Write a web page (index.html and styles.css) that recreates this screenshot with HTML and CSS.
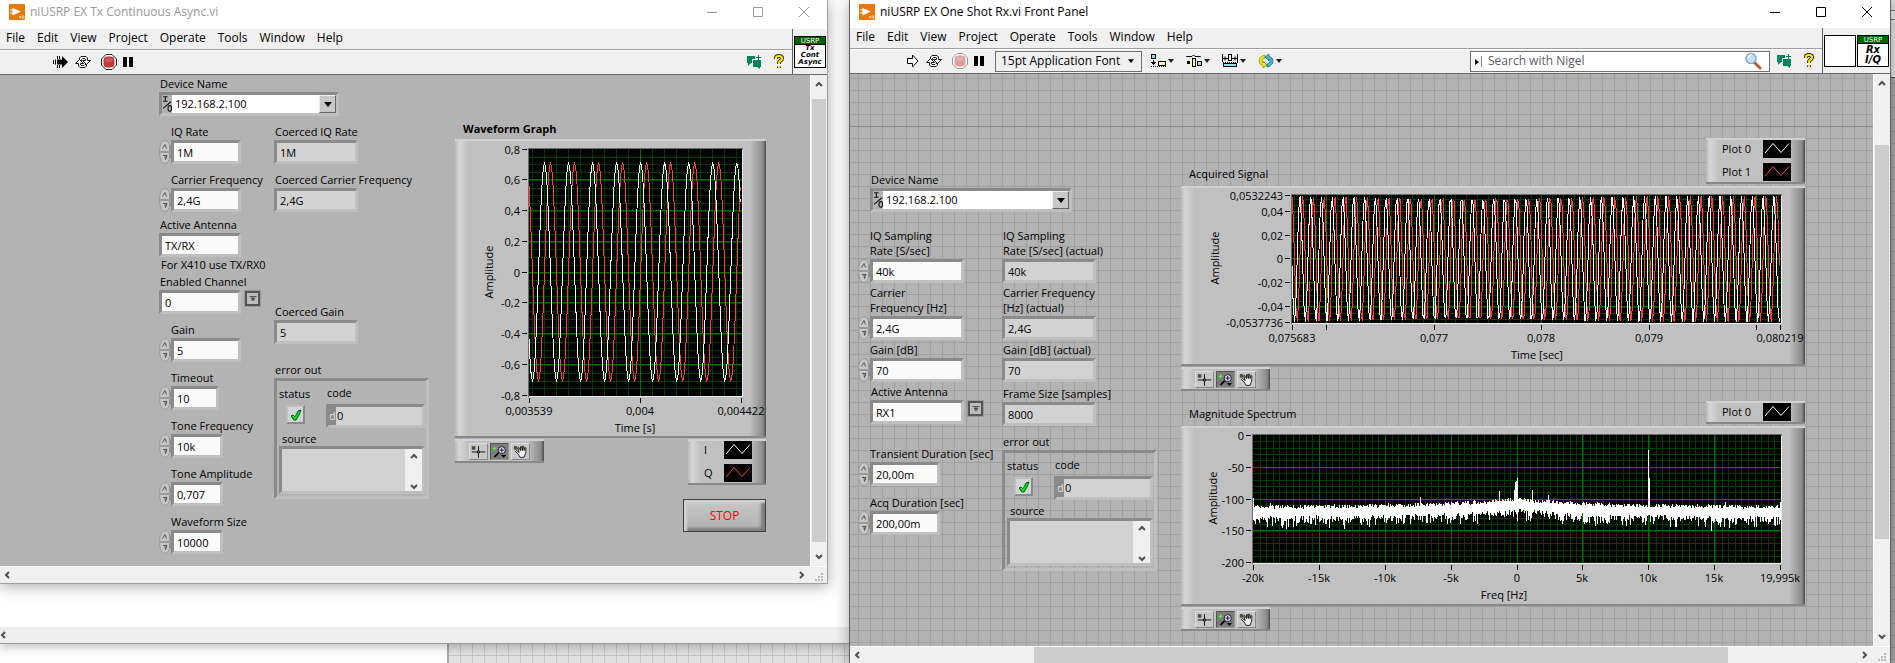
FILE: index.html
```html
<!DOCTYPE html>
<html lang="en">
<head>
<meta charset="utf-8">
<title>niUSRP front panels</title>
<link rel="stylesheet" href="styles.css">
</head>
<body>
<svg class="defs" aria-hidden="true">
  <symbol id="app" viewBox="0 0 16 16"><rect width="16" height="16" rx="1" fill="#e8780c"/><path d="M3.500 4 L12 7.500 L3.500 11.500Z" fill="#fff"/><path d="M1 6h3M1 9h3" stroke="#fff"/><path d="M10 12l2 2m0-2l-2 2M13 12h2v2h-2z" stroke="#fbd9b8" fill="none" stroke-width=".8"/></symbol>
  <symbol id="min" viewBox="0 0 12 12"><path d="M1 6.500h10" stroke="currentColor"/></symbol>
  <symbol id="max" viewBox="0 0 12 12"><path d="M1.500 1.500h9v9h-9z" stroke="currentColor" fill="none"/></symbol>
  <symbol id="cls" viewBox="0 0 12 12"><path d="M1 1l10 10M11 1L1 11" stroke="currentColor" fill="none"/></symbol>
  <symbol id="runfast" viewBox="0 0 16 16"><path d="M9 2l6 6-6 6v-3.500H4v-5h5z" fill="#000"/><path d="M.500 6v4M2.500 5.500v5M4.500 2v3M6.500 2v3M4.500 11v3M6.500 11v3" stroke="#000"/></symbol>
  <symbol id="run" viewBox="0 0 16 16"><path d="M3.500 5.500h5v-3.500L14 8l-5.500 6v-3.500h-5z" fill="#fff" stroke="#000"/></symbol>
  <symbol id="cont" viewBox="0 0 16 16"><path d="M4.500 6.500V4L6 2.500h5L12.500 4v2.500h3l-4 4-4-4h3V5L10 4.500H7.500L6.500 5.500v1z" fill="#fff" stroke="#000" stroke-width=".9"/><path d="M11.500 10.500V12L10 13.500H5L3.500 12V9.500h-3l4-4 4 4h-3V11l.500.500h3l1-1z" fill="#fff" stroke="#000" stroke-width=".9"/></symbol>
  <symbol id="abort" viewBox="0 0 16 16"><path d="M5 .500h6L15.500 5v6L11 15.500H5L.500 11V5z" fill="#fff" stroke="currentColor"/><rect x="2.500" y="2.500" width="11" height="11" rx="4" fill="var(--stop)"/><rect x="4" y="4" width="8" height="4" rx="2" fill="#fff" opacity=".15"/></symbol>
  <symbol id="pause" viewBox="0 0 10 12"><path d="M0 1h4v10H0zM6 1h4v10H6z" fill="#000"/></symbol>
  <symbol id="align" viewBox="0 0 24 16"><rect x="1.500" y="1.500" width="4" height="4" fill="#8fe3ee" stroke="#000"/><rect x="8.500" y="8.500" width="7" height="4" fill="#fdf6a8" stroke="#000"/><path d="M3.500 7v5M1 9.500h5M2 10.500h3" stroke="#000"/><path d="M1 13.500h15" stroke="#000" stroke-dasharray="1 1"/><path d="M18 6h6l-3 4z" fill="#222"/></symbol>
  <symbol id="distrib" viewBox="0 0 24 16"><path d="M.500 4V3.500H6L7.500 2 9 3.500h5.500V4" stroke="#000" fill="none"/><path d="M1 8h3v3H1z" fill="#000"/><rect x="6.500" y="5.500" width="3" height="8" fill="#fdf6a8" stroke="#000"/><rect x="11.500" y="8.500" width="4" height="4" fill="#8fe3ee" stroke="#000"/><path d="M18 6h6l-3 4z" fill="#222"/></symbol>
  <symbol id="resize" viewBox="0 0 24 16"><path d="M.500 1v8M15.500 1v8M1 5.500h5M10 5.500h5M3 3.500v4M13 3.500v4" stroke="#000" fill="none"/><path d="M1 9.500h15" stroke="#000" stroke-dasharray="1 1"/><rect x="6.500" y="1.500" width="3" height="6" fill="#fdf6a8" stroke="#000"/><rect x="1.500" y="10.500" width="13" height="3" fill="#8fe3ee" stroke="#000"/><path d="M18 6h6l-3 4z" fill="#222"/></symbol>
  <symbol id="reorder" viewBox="0 0 24 16"><path d="M7 2C1 3 0 8 2 11l3 2v2l4-3-4-4v2C3 8 4 6 7 5z" fill="#efe21a" stroke="#8a8400" stroke-width=".7"/><path d="M9 14c6-1 7-6 5-9l-3-2V1L7 4l4 4V6c2 2 1 4-2 5z" fill="#3fb4d0" stroke="#0b6079" stroke-width=".7"/><path d="M18 6h6l-3 4z" fill="#222"/></symbol>
  <symbol id="chat" viewBox="0 0 16 14"><path d="M1 1h8v3H6v4H5l-3 3V8H1z" fill="#00855c"/><path d="M7 5h8v7h-1v2l-3-2H7z" fill="#00855c"/><path d="M12.500 0v5M10 2.500h5" stroke="#00855c"/></symbol>
  <symbol id="help" viewBox="0 0 12 16"><path d="M3 5V4q0-2 3-2t3 2.500q0 1.500-2 2.500-1 .500-1 3M6 12.500v1.500" fill="none" stroke="#222" stroke-width="4"/><path d="M3 5V4q0-2 3-2t3 2.500q0 1.500-2 2.500-1 .500-1 3M6 12.200v2" fill="none" stroke="#ffef00" stroke-width="2.200"/></symbol>
  <symbol id="lens" viewBox="0 0 18 18"><path d="M10 10l6 6" stroke="#b0603a" stroke-width="3" stroke-linecap="round"/><circle cx="7" cy="6.500" r="5" fill="#c4e4fa" stroke="#8aa8c8" stroke-width="1.500"/><path d="M4 6q1-3 4-3" stroke="#fff" fill="none" stroke-width="1.500"/></symbol>
  <symbol id="up" viewBox="0 0 8 6"><path d="M1 5l3-3 3 3" fill="none" stroke="#505050" stroke-width="2"/></symbol>
  <symbol id="down" viewBox="0 0 8 6"><path d="M1 1l3 3 3-3" fill="none" stroke="#505050" stroke-width="2"/></symbol>
  <symbol id="left" viewBox="0 0 6 8"><path d="M5 1L2 4l3 3" fill="none" stroke="#505050" stroke-width="2"/></symbol>
  <symbol id="right" viewBox="0 0 6 8"><path d="M1 1l3 3-3 3" fill="none" stroke="#505050" stroke-width="2"/></symbol>
  <symbol id="grip" viewBox="0 0 9 9"><path d="M6 0h2v2H6zM3 3h2v2H3zM6 3h2v2H6zM0 6h2v2H0zM3 6h2v2H3zM6 6h2v2H6z" fill="#bcbcbc"/></symbol>
  <symbol id="io" viewBox="0 0 9 16"><path d="M1 1.500h4M3 1.500v4M1 5.500h4M1 12L8 6M6.500 9.500h1l1 1v3l-1 1h-1l-1-1v-3z" fill="none" stroke="#111"/></symbol>
  <symbol id="drop" viewBox="0 0 8 5"><path d="M0 0h8L4 5z" fill="#000"/></symbol>
  <symbol id="ring" viewBox="0 0 8 6"><path d="M.500 .500h7M2 2h4L4 5z" fill="#555" stroke="#555"/></symbol>
  <symbol id="incr" viewBox="0 0 12 12"><path d="M.500 11.500Q1 1 6 .500 11 1 11.500 11.500z" fill="#c6c6c6" stroke="#9a9a9a"/><path d="M11 5v6" stroke="#777"/><path d="M3.500 8.500L6 4.500l1.500 4" fill="none" stroke="#555"/></symbol>
  <symbol id="decr" viewBox="0 0 12 12"><path d="M.500 .500Q1 11 6 11.500 11 11 11.500 .500z" fill="#c6c6c6" stroke="#9a9a9a"/><path d="M11 1v5" stroke="#777"/><path d="M4 3.500h4L6.500 7.500 6 4" fill="none" stroke="#555"/></symbol>
  <symbol id="tick" viewBox="0 0 14 14"><path d="M2 8l2-1 2 2 3-6 3-1-2 5-3 5H5z" fill="#00f000" stroke="#052" stroke-width="1"/></symbol>
  <symbol id="cursor" viewBox="0 0 19 16"><rect x="2" y="2" width="4" height="4" fill="#3c5a34"/><path d="M2 8.500h15M9.500 2v13" stroke="#000"/><rect x="8.500" y="7.500" width="2" height="2" fill="#bbb" stroke="#000" stroke-width=".8"/></symbol>
  <symbol id="zoomer" viewBox="0 0 19 16"><path d="M2 4.500h4M4 2.500v4" stroke="#4f3" stroke-width="1.400"/><path d="M9 9l-5 5" stroke="#000" stroke-width="2"/><circle cx="12" cy="6.500" r="4" fill="#dde" stroke="#112"/><path d="M9.500 6.500h5M12 4v5" stroke="#112"/><path d="M11 12h6l-3 3z" fill="#000"/></symbol>
  <symbol id="hand" viewBox="0 0 19 16"><rect x="2" y="2" width="4" height="4" fill="#3c5a34"/><path d="M7 11L4 8l1-1 3 2L6.500 4l1-.500L9.500 7V2.500h1L11.500 7l.500-5h1l.500 5 1-3.500 1 .500V9l-2 5.500H9z" fill="#eee" stroke="#000" stroke-width=".9"/></symbol>
  <symbol id="white-line" viewBox="0 0 28 18"><rect width="28" height="18" fill="#000"/><path d="M2 13l8-9.500 8 9 8-9" fill="none" stroke="#fff"/></symbol>
  <symbol id="red-line" viewBox="0 0 28 18"><rect width="28" height="18" fill="#000"/><path d="M2 13l8-9.500 8 9 8-9" fill="none" stroke="#f04848"/></symbol>
</svg>

<main class="desktop">
  <div class="backdrop"><div class="sheet"></div></div>
  <div class="back-window"><div class="back-bar"><svg width="6" height="8"><use href="#left"/></svg></div></div>
  <div class="edge"></div>

  <section class="window tx">
    <header class="titlebar muted">
      <svg width="16" height="16"><use href="#app"/></svg><h1>niUSRP EX Tx Continuous Async.vi</h1>
      <button aria-label="Minimize"><svg width="12" height="12"><use href="#min"/></svg></button><button aria-label="Maximize"><svg width="12" height="12"><use href="#max"/></svg></button><button aria-label="Close"><svg width="12" height="12"><use href="#cls"/></svg></button>
    </header>
    <div class="head">
      <div class="bars">
        <nav class="menu"><a href="#">File</a><a href="#">Edit</a><a href="#">View</a><a href="#">Project</a><a href="#">Operate</a><a href="#">Tools</a><a href="#">Window</a><a href="#">Help</a></nav>
        <div class="toolbar">
          <button aria-label="Run"><svg width="16" height="16"><use href="#runfast"/></svg></button>
          <button aria-label="Run continuously"><svg width="16" height="16"><use href="#cont"/></svg></button>
          <button class="abort" aria-label="Abort"><svg width="16" height="16"><use href="#abort"/></svg></button>
          <button aria-label="Pause"><svg width="10" height="12"><use href="#pause"/></svg></button>
          <span class="fill"></span>
          <button aria-label="Nigel"><svg width="16" height="14"><use href="#chat"/></svg></button>
          <button class="help" aria-label="Help"><svg width="12" height="16"><use href="#help"/></svg></button>
        </div>
      </div>
      <div class="icons"><div class="vi"><b>USRP</b><i>Tx<br>Cont<br>Async</i></div></div>
    </div>
    <div class="view">
      <div class="panel">
        <div class="controls">
          <div class="item"><label for="t-dev">Device Name</label><div class="field combo"><svg width="9" height="16"><use href="#io"/></svg><select id="t-dev"><option>192.168.2.100</option></select><span class="arrow"><svg width="8" height="5"><use href="#drop"/></svg></span></div></div>
          <div class="cols">
            <div class="col">
              <div class="item num"><label for="t1">IQ Rate</label><div class="spin"><button aria-label="Increment"><svg width="12" height="12"><use href="#incr"/></svg></button><button aria-label="Decrement"><svg width="12" height="12"><use href="#decr"/></svg></button></div><input class="field w70" id="t1" value="1M"></div>
              <div class="item num close"><label for="t2">Carrier Frequency</label><div class="spin"><button aria-label="Increment"><svg width="12" height="12"><use href="#incr"/></svg></button><button aria-label="Decrement"><svg width="12" height="12"><use href="#decr"/></svg></button></div><input class="field w70" id="t2" value="2,4G"></div>
              <div class="item tight"><label for="t3">Active Antenna</label><input class="field w82" id="t3" value="TX/RX"></div>
              <p class="hint">For X410 use TX/RX0</p>
              <div class="item"><label for="t4">Enabled Channel</label><div class="row"><input class="field w82" id="t4" value="0"><button class="ring" aria-label="Channel list"><svg width="8" height="6"><use href="#ring"/></svg></button></div></div>
              <div class="item num"><label for="t5">Gain</label><div class="spin"><button aria-label="Increment"><svg width="12" height="12"><use href="#incr"/></svg></button><button aria-label="Decrement"><svg width="12" height="12"><use href="#decr"/></svg></button></div><input class="field w70" id="t5" value="5"></div>
              <div class="item num"><label for="t6">Timeout</label><div class="spin"><button aria-label="Increment"><svg width="12" height="12"><use href="#incr"/></svg></button><button aria-label="Decrement"><svg width="12" height="12"><use href="#decr"/></svg></button></div><input class="field w48" id="t6" value="10"></div>
              <div class="item num"><label for="t7">Tone Frequency</label><div class="spin"><button aria-label="Increment"><svg width="12" height="12"><use href="#incr"/></svg></button><button aria-label="Decrement"><svg width="12" height="12"><use href="#decr"/></svg></button></div><input class="field w52" id="t7" value="10k"></div>
              <div class="item num"><label for="t8">Tone Amplitude</label><div class="spin"><button aria-label="Increment"><svg width="12" height="12"><use href="#incr"/></svg></button><button aria-label="Decrement"><svg width="12" height="12"><use href="#decr"/></svg></button></div><input class="field w52" id="t8" value="0,707"></div>
              <div class="item num"><label for="t9">Waveform Size</label><div class="spin"><button aria-label="Increment"><svg width="12" height="12"><use href="#incr"/></svg></button><button aria-label="Decrement"><svg width="12" height="12"><use href="#decr"/></svg></button></div><input class="field w52" id="t9" value="10000"></div>
            </div>
            <div class="col second">
              <div class="item"><label for="t10">Coerced IQ Rate</label><input class="field ind w84" id="t10" value="1M" readonly></div>
              <div class="item"><label for="t11">Coerced Carrier Frequency</label><input class="field ind w84" id="t11" value="2,4G" readonly></div>
              <div class="item coerced-gain"><label for="t12">Coerced Gain</label><input class="field ind w84" id="t12" value="5" readonly></div>
              <div class="item"><span class="cap">error out</span>
                <div class="field cluster">
                  <div class="status"><span>status</span><span class="led"><svg width="14" height="14"><use href="#tick"/></svg></span></div>
                  <div class="code"><label for="t13">code</label><div class="field ind radix"><span>d</span><input id="t13" value="0" readonly></div></div>
                  <div class="source"><label for="t14">source</label><div class="field ind text"><textarea id="t14" readonly></textarea><div class="mini"><svg width="8" height="6"><use href="#up"/></svg><svg width="8" height="6"><use href="#down"/></svg></div></div></div>
                </div>
              </div>
            </div>
          </div>
        </div>
        <div class="graph">
          <h2 class="strong">Waveform Graph</h2>
          <div class="frame"><svg class="chart" data-chart="wave" width="311" height="295" viewBox="0 1 311 295"></svg></div>
          <div class="under">
            <div class="frame palette"><button aria-label="Cursor"><svg width="19" height="16"><use href="#cursor"/></svg></button><button class="on" aria-label="Zoom"><svg width="19" height="16"><use href="#zoomer"/></svg></button><button aria-label="Pan"><svg width="19" height="16"><use href="#hand"/></svg></button></div>
            <div class="frame legend narrow"><span>I<svg width="28" height="18"><use href="#white-line"/></svg></span><span>Q<svg width="28" height="18"><use href="#red-line"/></svg></span></div>
          </div>
          <button class="stop">STOP</button>
        </div>
      </div>
      <div class="vscroll"><svg width="8" height="6"><use href="#up"/></svg><div class="thumb"></div><svg width="8" height="6"><use href="#down"/></svg></div>
    </div>
    <div class="hscroll"><svg width="6" height="8"><use href="#left"/></svg><div class="thumb none"></div><svg width="6" height="8"><use href="#right"/></svg><svg class="grip" width="9" height="9"><use href="#grip"/></svg></div>
  </section>

  <section class="window rx">
    <header class="titlebar">
      <svg width="16" height="16"><use href="#app"/></svg><h1>niUSRP EX One Shot Rx.vi Front Panel</h1>
      <button aria-label="Minimize"><svg width="12" height="12"><use href="#min"/></svg></button><button aria-label="Maximize"><svg width="12" height="12"><use href="#max"/></svg></button><button aria-label="Close"><svg width="12" height="12"><use href="#cls"/></svg></button>
    </header>
    <div class="head">
      <div class="bars">
        <nav class="menu"><a href="#">File</a><a href="#">Edit</a><a href="#">View</a><a href="#">Project</a><a href="#">Operate</a><a href="#">Tools</a><a href="#">Window</a><a href="#">Help</a></nav>
        <div class="toolbar">
          <button aria-label="Run"><svg width="16" height="16"><use href="#run"/></svg></button>
          <button aria-label="Run continuously"><svg width="16" height="16"><use href="#cont"/></svg></button>
          <button class="abort off" aria-label="Abort"><svg width="16" height="16"><use href="#abort"/></svg></button>
          <button aria-label="Pause"><svg width="10" height="12"><use href="#pause"/></svg></button>
          <div class="font"><select aria-label="Font"><option>15pt Application Font</option></select><svg width="6" height="4"><use href="#drop"/></svg></div>
          <button aria-label="Align"><svg width="24" height="16"><use href="#align"/></svg></button>
          <button aria-label="Distribute"><svg width="24" height="16"><use href="#distrib"/></svg></button>
          <button aria-label="Resize"><svg width="24" height="16"><use href="#resize"/></svg></button>
          <button aria-label="Reorder"><svg width="24" height="16"><use href="#reorder"/></svg></button>
          <span class="fill"></span>
          <div class="search"><span class="mark"></span><input aria-label="Search" placeholder="Search with Nigel"><svg width="18" height="18"><use href="#lens"/></svg></div>
          <button aria-label="Nigel"><svg width="16" height="14"><use href="#chat"/></svg></button>
          <button class="help" aria-label="Help"><svg width="12" height="16"><use href="#help"/></svg></button>
        </div>
      </div>
      <div class="icons"><div class="vi"></div><div class="vi big"><b>USRP</b><i>Rx<br>I/Q</i></div></div>
    </div>
    <div class="view">
      <div class="panel gridded">
        <div class="controls">
          <div class="item shift device"><label for="r-dev">Device Name</label><div class="field combo"><svg width="9" height="16"><use href="#io"/></svg><select id="r-dev"><option>192.168.2.100</option></select><span class="arrow"><svg width="8" height="5"><use href="#drop"/></svg></span></div></div>
          <div class="cols">
            <div class="col">
              <div class="item num"><label for="r1">IQ Sampling<br>Rate [S/sec]</label><div class="spin"><button aria-label="Increment"><svg width="12" height="12"><use href="#incr"/></svg></button><button aria-label="Decrement"><svg width="12" height="12"><use href="#decr"/></svg></button></div><input class="field w94" id="r1" value="40k"></div>
              <div class="item num"><label for="r2">Carrier<br>Frequency [Hz]</label><div class="spin"><button aria-label="Increment"><svg width="12" height="12"><use href="#incr"/></svg></button><button aria-label="Decrement"><svg width="12" height="12"><use href="#decr"/></svg></button></div><input class="field w94" id="r2" value="2,4G"></div>
              <div class="item num"><label for="r3">Gain [dB]</label><div class="spin"><button aria-label="Increment"><svg width="12" height="12"><use href="#incr"/></svg></button><button aria-label="Decrement"><svg width="12" height="12"><use href="#decr"/></svg></button></div><input class="field w94" id="r3" value="70"></div>
              <div class="item shift antenna"><label for="r4">Active Antenna</label><div class="row"><input class="field w94" id="r4" value="RX1"><button class="ring" aria-label="Antenna list"><svg width="8" height="6"><use href="#ring"/></svg></button></div></div>
              <div class="item num wide"><label for="r5">Transient Duration [sec]</label><div class="spin"><button aria-label="Increment"><svg width="12" height="12"><use href="#incr"/></svg></button><button aria-label="Decrement"><svg width="12" height="12"><use href="#decr"/></svg></button></div><input class="field w70" id="r5" value="20,00m"></div>
              <div class="item num wide"><label for="r6">Acq Duration [sec]</label><div class="spin"><button aria-label="Increment"><svg width="12" height="12"><use href="#incr"/></svg></button><button aria-label="Decrement"><svg width="12" height="12"><use href="#decr"/></svg></button></div><input class="field w70" id="r6" value="200,00m"></div>
            </div>
            <div class="col second">
              <div class="item"><label for="r7">IQ Sampling<br>Rate [S/sec] (actual)</label><input class="field ind w94" id="r7" value="40k" readonly></div>
              <div class="item"><label for="r8">Carrier Frequency<br>[Hz] (actual)</label><input class="field ind w94" id="r8" value="2,4G" readonly></div>
              <div class="item gain"><label for="r9">Gain [dB] (actual)</label><input class="field ind w94" id="r9" value="70" readonly></div>
              <div class="item frames"><label for="r10">Frame Size [samples]</label><input class="field ind w94" id="r10" value="8000" readonly></div>
              <div class="item"><span class="cap">error out</span>
                <div class="field cluster">
                  <div class="status"><span>status</span><span class="led"><svg width="14" height="14"><use href="#tick"/></svg></span></div>
                  <div class="code"><label for="r11">code</label><div class="field ind radix"><span>d</span><input id="r11" value="0" readonly></div></div>
                  <div class="source"><label for="r12">source</label><div class="field ind text"><textarea id="r12" readonly></textarea><div class="mini"><svg width="8" height="6"><use href="#up"/></svg><svg width="8" height="6"><use href="#down"/></svg></div></div></div>
                </div>
              </div>
            </div>
          </div>
        </div>
        <div class="graph">
          <div class="over"><h2>Acquired Signal</h2><div class="frame legend"><span>Plot 0<svg width="28" height="18"><use href="#white-line"/></svg></span><span>Plot 1<svg width="28" height="18"><use href="#red-line"/></svg></span></div></div>
          <div class="frame"><svg class="chart" data-chart="signal" width="624" height="176" viewBox="0 1 624 176"></svg></div>
          <div class="under"><div class="frame palette"><button aria-label="Cursor"><svg width="19" height="16"><use href="#cursor"/></svg></button><button class="on" aria-label="Zoom"><svg width="19" height="16"><use href="#zoomer"/></svg></button><button aria-label="Pan"><svg width="19" height="16"><use href="#hand"/></svg></button></div></div>
          <div class="over spaced"><h2>Magnitude Spectrum</h2><div class="frame legend"><span>Plot 0<svg width="28" height="18"><use href="#white-line"/></svg></span></div></div>
          <div class="frame"><svg class="chart" data-chart="spectrum" width="624" height="176" viewBox="0 1 624 176"></svg></div>
          <div class="under"><div class="frame palette"><button aria-label="Cursor"><svg width="19" height="16"><use href="#cursor"/></svg></button><button class="on" aria-label="Zoom"><svg width="19" height="16"><use href="#zoomer"/></svg></button><button aria-label="Pan"><svg width="19" height="16"><use href="#hand"/></svg></button></div></div>
        </div>
      </div>
      <div class="vscroll"><svg width="8" height="6"><use href="#up"/></svg><div class="thumb"></div><svg width="8" height="6"><use href="#down"/></svg></div>
    </div>
    <div class="hscroll"><svg width="6" height="8"><use href="#left"/></svg><div class="thumb"></div><svg width="6" height="8"><use href="#right"/></svg><svg class="grip" width="9" height="9"><use href="#grip"/></svg></div>
  </section>
</main>
<script src="charts.js"></script>
</body>
</html>
```

FILE: styles.css
```css
* { box-sizing: border-box; }
html, body { margin: 0; height: 100%; }
body { font: 11px/16px "Open Sans", "Noto Sans", sans-serif; color: #000; background: #fff; overflow: hidden; }
button, input, select, textarea { font: inherit; color: inherit; margin: 0; padding: 0; border: 0; background: none; border-radius: 0; outline: 0; min-width: 0; }
button { display: flex; align-items: center; justify-content: center; }
select { appearance: none; }
svg { display: block; flex: none; }
h1, h2, p { margin: 0; font: inherit; white-space: nowrap; }
label, .cap { white-space: nowrap; }
.defs { position: absolute; width: 0; height: 0; }

/* desktop */
.desktop { display: grid; grid-template-columns: 828fr 21fr 1042fr 4fr; grid-template-rows: auto 60px 1fr; height: 100vh; }
.backdrop { grid-column: 1 / 3; grid-row: 3; display: flex; justify-content: flex-end; }
.sheet { width: 402px; border-left: 2px solid #a8a8a8; background: repeating-linear-gradient(to right, transparent 0 11px, #c6c6c6 11px 12px), repeating-linear-gradient(transparent 0 11px, #c6c6c6 11px 12px), #e1e1e1; }
.back-window { grid-column: 1 / 3; grid-row: 1 / 3; display: flex; align-items: flex-end; background: #fff; border-bottom: 1px solid #9a9a9a; box-shadow: 0 3px 10px rgba(0,0,0,.25); }
.back-bar { flex: 1; height: 16px; background: #efefef; display: flex; align-items: center; }
.edge { grid-column: 4; grid-row: 1 / 4; background: linear-gradient(#ddd 0 10px, #777 10px 11px, #eee 11px 19px, #777 19px 20px, #e4e4e4 20px 77px, #555 77px 78px, transparent 78px), repeating-linear-gradient(#a9a9a9 0 11px, #989898 11px 12px); }
.window { z-index: 1; display: flex; flex-direction: column; background: #fff; box-shadow: 0 2px 14px rgba(0,0,0,.35); min-width: 0; }
.tx { grid-column: 1; grid-row: 1; border-right: 1px solid #a0a0a0; border-bottom: 1px solid #a0a0a0; }
.rx { grid-column: 3; grid-row: 1 / 4; border: solid #606060; border-width: 0 1px; }

/* title, menu, tools */
.titlebar { display: flex; height: 29px; padding: 0 0 5px 9px; align-items: center; font-size: 12px; }
.rx .titlebar { height: 28px; }
.titlebar h1 { flex: 1; padding-left: 5px; }
.titlebar button { width: 46px; height: 24px; }
.muted { color: #999; }
.head { display: flex; background: #f0f0f0; border-bottom: 1px solid #686868; }
.bars { flex: 1; min-width: 0; }
.menu { display: flex; height: 20px; padding: 0 6px 2px; align-items: center; gap: 12px; font-size: 12px; }
.menu a { color: #000; text-decoration: none; }
.toolbar { display: flex; height: 25px; align-items: center; gap: 6px; padding: 0 4px 0 53px; border-top: 1px solid #a0a0a0; box-shadow: inset 0 1px #fff; }
.rx .toolbar { padding-left: 54px; }
.abort { margin-left: 4px; --stop: #c23b3b; color: #222; }
.abort.off { --stop: #dba0a0; color: #999; }
.fill { flex: 1; }
.help { margin-left: 2px; width: 18px; }
.font { display: flex; align-items: center; width: 147px; height: 21px; margin: 0 2px 0 5px; padding: 0 7px 0 5px; border: 1px solid #707070; font-size: 12px; }
.font select { flex: 1; }
.font + button, .font + button + button, .font + button + button + button { margin-right: 6px; }
.search { display: flex; align-items: center; width: 300px; height: 21px; border: 1px solid #707070; background: #fff; font-size: 12px; padding-right: 7px; }
.search input { flex: 1; padding-left: 6px; }
.search input::placeholder { color: #606060; opacity: 1; }
.mark { width: 11px; height: 11px; background: #f6f6f6; border-right: 1px solid #888; }
.mark::before { content: ""; display: block; width: 0; height: 0; margin: 3px 0 0 4px; border: solid transparent; border-width: 3px 0 3px 4px; border-left-color: #000; }
.icons { display: flex; align-items: center; gap: 1px; padding: 0 1px; border-left: 1px solid #606060; }
.vi { width: 32px; height: 32px; border: 1px solid #000; background: #fff; text-align: center; overflow: hidden; }
.vi b { display: block; height: 8px; background: #006400; color: #fff; font: 7px/8px "DejaVu Sans", sans-serif; border-bottom: 1px solid #000; }
.vi i { display: block; font: italic bold 7px/7px "DejaVu Sans", sans-serif; }
.big i { font-size: 10px; line-height: 10px; padding-top: 1px; }

/* panel area */
.view { display: flex; flex: 1; min-height: 0; }
.panel { flex: 1; display: flex; gap: 26px; min-width: 0; background: #b3b3b3; padding: 1px 0 4px 159px; }
.gridded { padding: 98px 0 0 8px; gap: 25px; background: linear-gradient(transparent 52px, #8c8c8c 52px 53px, transparent 53px), repeating-linear-gradient(to right, transparent 0 8px, #a0a0a0 8px 9px, transparent 9px 12px), repeating-linear-gradient(transparent 0 4px, #a0a0a0 4px 5px, transparent 5px 12px), #b3b3b3; }
.cols { display: flex; }
.col { width: 115px; }
.second { width: 155px; }
.item { display: flex; flex-direction: column; margin-bottom: 8px; align-items: flex-start; }
.item label, .cap { padding-left: 1px; }
.num { display: grid; grid-template-columns: 12px auto; justify-content: start; }
.num > label { grid-column: 1 / 3; padding-left: 12px; width: 0; }
.num .spin { height: 24px; }
.close { margin-bottom: 5px; }
.tight { margin-bottom: 0; }
.hint { padding-left: 2px; margin-bottom: 1px; }
.coerced-gain { margin-top: 92px; margin-bottom: 18px; }
.row { display: flex; gap: 4px; }
.field { height: 24px; border: 3px solid; border-color: #8a8a8a #bfbfbf #bfbfbf #8a8a8a; background: #fafafa; padding: 0 3px; }
.ind { background: #d2d2d2; }
.w48 { width: 48px; } .w52 { width: 52px; } .w70 { width: 70px; } .w82 { width: 82px; } .w84 { width: 84px; } .w94 { width: 94px; }
.combo { display: flex; align-items: stretch; width: 180px; padding: 0; background: #fff; }
.combo > svg { background: #b3b3b3; height: 18px; width: 10px; }
.combo select { flex: 1; padding-left: 3px; }
.arrow { width: 17px; display: grid; place-items: center; background: #c8c8c8; border: 1px solid; border-color: #eee #666 #666 #eee; }
.ring { width: 15px; height: 15px; margin-top: 1px; background: #bcbcbc; border: 2px solid #555; outline: 1px solid #9a9a9a; }

.cluster { width: 155px; height: 121px; background: none; padding: 4px 1px 2px 2px; display: grid; grid-template-columns: 47px minmax(0, 1fr); grid-template-rows: 46px minmax(0, 1fr); }
.status, .code { display: flex; flex-direction: column; gap: 3px; }
.status { padding-top: 1px; }
.led { width: 19px; height: 19px; margin-left: 7px; display: grid; place-items: center; background: #d4d4d4; border: 2px solid; border-color: #bfbfbf #8a8a8a #8a8a8a #bfbfbf; }
.radix { display: flex; padding: 0; }
.radix span { width: 7px; color: #ddd; background: #8a8a8a; line-height: 18px; }
.radix input { flex: 1; width: 0; padding-left: 1px; }
.source { grid-column: 1 / 3; display: flex; flex-direction: column; }
.source label { line-height: 15px; padding-left: 3px; }
.text { flex: 1; display: flex; padding: 0; height: auto; min-height: 0; }
.text textarea { flex: 1; width: 0; resize: none; }
.mini { width: 17px; display: flex; flex-direction: column; justify-content: space-between; align-items: center; padding: 4px 0 1px; background: #f0f0f0; }

/* receiver panel */
.rx .col { width: 144px; }
.rx .second { width: 154px; }
.rx .item { margin-bottom: 2px; }
.rx .item > label, .rx .cap { line-height: 15px; padding: 0 0 1px 1px; }
.rx .num > label { padding-left: 12px; }
.rx .shift { margin-left: 12px; }
.rx .combo { width: 202px; }
.rx .item.device { margin-bottom: 16px; }
.rx .item.antenna { margin-bottom: 22px; }
.rx .item.wide { margin-bottom: 9px; }
.rx .item.gain { margin-bottom: 4px; }
.rx .item.frames { margin-bottom: 8px; }

/* graphs */
.graph { padding-top: 45px; }
.gridded .graph { margin-top: -34px; padding-top: 0; }
.graph h2 { padding-left: 8px; height: 18px; }
.strong { font-weight: bold; }
.frame { background: linear-gradient(to right, #b8b8b8 0, #d6d6d6 4px, #c8c8c8 10px, #c0c0c0 13px, #c0c0c0 calc(100% - 16px), #8a8a8a calc(100% - 3px), #4c4c4c 100%); border: solid; border-width: 2px 0; border-color: #d2d2d2 transparent #888; }
.chart text { font-size: 11px; fill: #000; }
.under, .over { display: flex; justify-content: space-between; align-items: flex-start; }
.under { padding-top: 1px; }
.over { align-items: flex-end; padding-bottom: 2px; }
.spaced { padding-top: 10px; }
.palette { display: flex; gap: 2px; padding: 2px 14px; width: 89px; height: 24px; }
.palette button { width: 19px; height: 17px; background: #c8c8c8; border: 1px solid; border-color: #ddd #888 #888 #ddd; }
.palette svg { width: 17px; height: 15px; }
.palette .on { background: #7c7c7c; border-color: #555 #999 #999 #555; }
.legend { width: 99px; padding: 0 14px 1px 16px; display: grid; gap: 5px; }
.legend.narrow { width: 78px; }
.legend span { display: flex; justify-content: space-between; align-items: center; height: 18px; }
.stop { width: 83px; height: 33px; margin: 14px 0 0 auto; color: #f00; font-size: 12px; border: 1px solid #404040; background: linear-gradient(#c8c8c8, #b0b0b0); box-shadow: inset 3px 3px 2px #d0d0d0, inset -4px -3px 3px #7c7c7c; }

/* scroll bars */
.vscroll { width: 17px; display: flex; flex-direction: column; align-items: center; background: #f0f0f0; border-left: 1px solid #fff; padding: 6px 1px; gap: 12px; }
.vscroll .thumb { flex: 1; width: 100%; background: #cdcdcd; }
.rx .vscroll .thumb { margin: 47px 0 83px; }
.hscroll { height: 17px; display: flex; align-items: center; background: #f0f0f0; border-top: 1px solid #fff; padding: 0 3px 0 4px; }
.hscroll .thumb { flex: 1; height: 100%; background: #cdcdcd; margin: 0 134px 0 174px; }
.hscroll .none { background: none; }
.grip { margin: 5px 0 0 10px; }
```

FILE: charts.js
```js
const NS = 'http://www.w3.org/2000/svg';

function add(svg, tag, attrs, text) {
  const el = document.createElementNS(NS, tag);
  for (const key in attrs) el.setAttribute(key, attrs[key]);
  if (text !== undefined) el.textContent = text;
  svg.appendChild(el);
}

function base(svg, c) {
  add(svg, 'rect', { x: c.x - 1, y: c.y - 1, width: c.w + 2, height: c.h + 2, fill: '#6a6a6a' });
  add(svg, 'path', { d: `M${c.x} ${c.y + c.h + .5}h${c.w + .5}v${-c.h}`, stroke: '#eee', fill: 'none' });
  add(svg, 'rect', { x: c.x, y: c.y, width: c.w, height: c.h, fill: '#000' });
  let minor = '', major = '';
  for (let x = c.minorX[0]; x < c.x + c.w; x += c.minorX[1]) if (x > c.x) minor += `M${Math.round(x) + .5} ${c.y}v${c.h}`;
  for (let y = c.minorY[0]; y < c.y + c.h; y += c.minorY[1]) if (y > c.y) minor += `M${c.x} ${Math.round(y) + .5}h${c.w}`;
  for (const x of c.majorX) major += `M${x + .5} ${c.y}v${c.h}`;
  for (const y of c.majorY) major += `M${c.x} ${y + .5}h${c.w}`;
  add(svg, 'path', { d: minor, stroke: '#003c00' });
  add(svg, 'path', { d: major, stroke: '#007000' });
  for (const [y, t] of c.yt) {
    add(svg, 'path', { d: `M${c.x - 7} ${y + .5}h5`, stroke: '#000' });
    add(svg, 'text', { x: c.x - 9, y: y + 5, 'text-anchor': 'end' }, t);
  }
  for (const [x, t] of c.xt) {
    add(svg, 'path', { d: `M${x + .5} ${c.y + c.h + 2}v5`, stroke: '#000' });
    if (t) add(svg, 'text', { x, y: c.y + c.h + 19, 'text-anchor': 'middle' }, t);
  }
  add(svg, 'text', { x: c.titleX, y: c.y + c.h + 36, 'text-anchor': 'middle' }, c.title);
  add(svg, 'text', { transform: `translate(${c.ampX} ${c.ampY}) rotate(-90)`, 'text-anchor': 'middle' }, 'Amplitude');
}

function sine(svg, c, peak, period, step, mid, amp, color) {
  const pts = [];
  for (let x = c.x; x <= c.x + c.w - 1; x += step) pts.push(`${x.toFixed(1)},${(mid - amp * Math.cos((x - peak) / period * 2 * Math.PI)).toFixed(1)}`);
  add(svg, 'polyline', { points: pts.join(' '), fill: 'none', stroke: color, 'shape-rendering': 'crispEdges' });
}

const charts = {
  wave(svg) {
    const c = {
      x: 74, y: 9, w: 213, h: 247, minorX: [77, 12], minorY: [9, 7.72], majorX: [185], majorY: [39, 70, 101, 132, 162, 193, 224],
      yt: [[9, '0,8'], [39, '0,6'], [70, '0,4'], [101, '0,2'], [132, '0'], [162, '-0,2'], [193, '-0,4'], [224, '-0,6'], [255, '-0,8']],
      xt: [[74, '0,003539'], [185, '0,004'], [286, '0,004422']], title: 'Time [s]', titleX: 180, ampX: 38, ampY: 132
    };
    base(svg, c);
    sine(svg, c, 95.5, 24.04, 1.2, 132, 109.5, '#ff4040');
    sine(svg, c, 89.5, 24.04, 1.2, 132, 109.5, '#fff');
  },
  signal(svg) {
    const c = {
      x: 111, y: 8, w: 489, h: 128, minorX: [113, 10.75], minorY: [12, 6], majorX: [145, 253, 360, 468, 575], majorY: [24, 48, 71, 95, 119],
      yt: [[8, '0,0532243'], [24, '0,04'], [48, '0,02'], [71, '0'], [95, '-0,02'], [119, '-0,04'], [135, '-0,0537736']],
      xt: [[111, '0,075683'], [145, ''], [253, '0,077'], [360, '0,078'], [468, '0,079'], [575, ''], [599, '0,080219']], title: 'Time [sec]', titleX: 356, ampX: 38, ampY: 71
    };
    base(svg, c);
    sine(svg, c, 121.6, 10.77, 1.35, 72, 63, '#ff4040');
    sine(svg, c, 118.9, 10.77, 1.35, 72, 63, '#fff');
  },
  spectrum(svg) {
    const c = {
      x: 72, y: 8, w: 528, h: 128, minorX: [72, 6.6], minorY: [8, 6.37], majorX: [138, 204, 270, 336, 401, 467, 533], majorY: [40, 72, 103],
      yt: [[8, '0'], [40, '-50'], [72, '-100'], [103, '-150'], [135, '-200']],
      xt: [[72, '-20k'], [138, '-15k'], [204, '-10k'], [270, '-5k'], [336, '0'], [401, '5k'], [467, '10k'], [533, '15k'], [599, '19,995k']], title: 'Freq [Hz]', titleX: 323, ampX: 36, ampY: 71
    };
    base(svg, c);
    let seed = 7, d = '';
    const rnd = () => (seed = seed * 16807 % 2147483647) / 2147483647;
    for (let x = 72; x < 600; x++) {
      const lift = 8 * Math.exp(-Math.abs(x - 336) / 75);
      let top = 82 - lift - 4 * rnd(), bottom = 89 - lift + 4 * rnd() + 10 * Math.pow(rnd(), 3);
      if (rnd() > .98) top -= 4;
      if (rnd() > .97) bottom += 5;
      d += `M${x + .5} ${Math.round(top)}V${Math.round(bottom)}`;
    }
    d += 'M333.5 63V80M334.500 55V80M335.500 54V80M336.500 51V94M318.500 64V80M351.500 63V80M239.500 70V82M367.500 68V80M467.500 23V84M468.500 51V84M72.500 71V93M599.500 75V93M530.500 84V104';
    add(svg, 'path', { d, stroke: '#fff', 'shape-rendering': 'crispEdges' });
  }
};

document.querySelectorAll('.chart').forEach(svg => charts[svg.dataset.chart](svg));
```
